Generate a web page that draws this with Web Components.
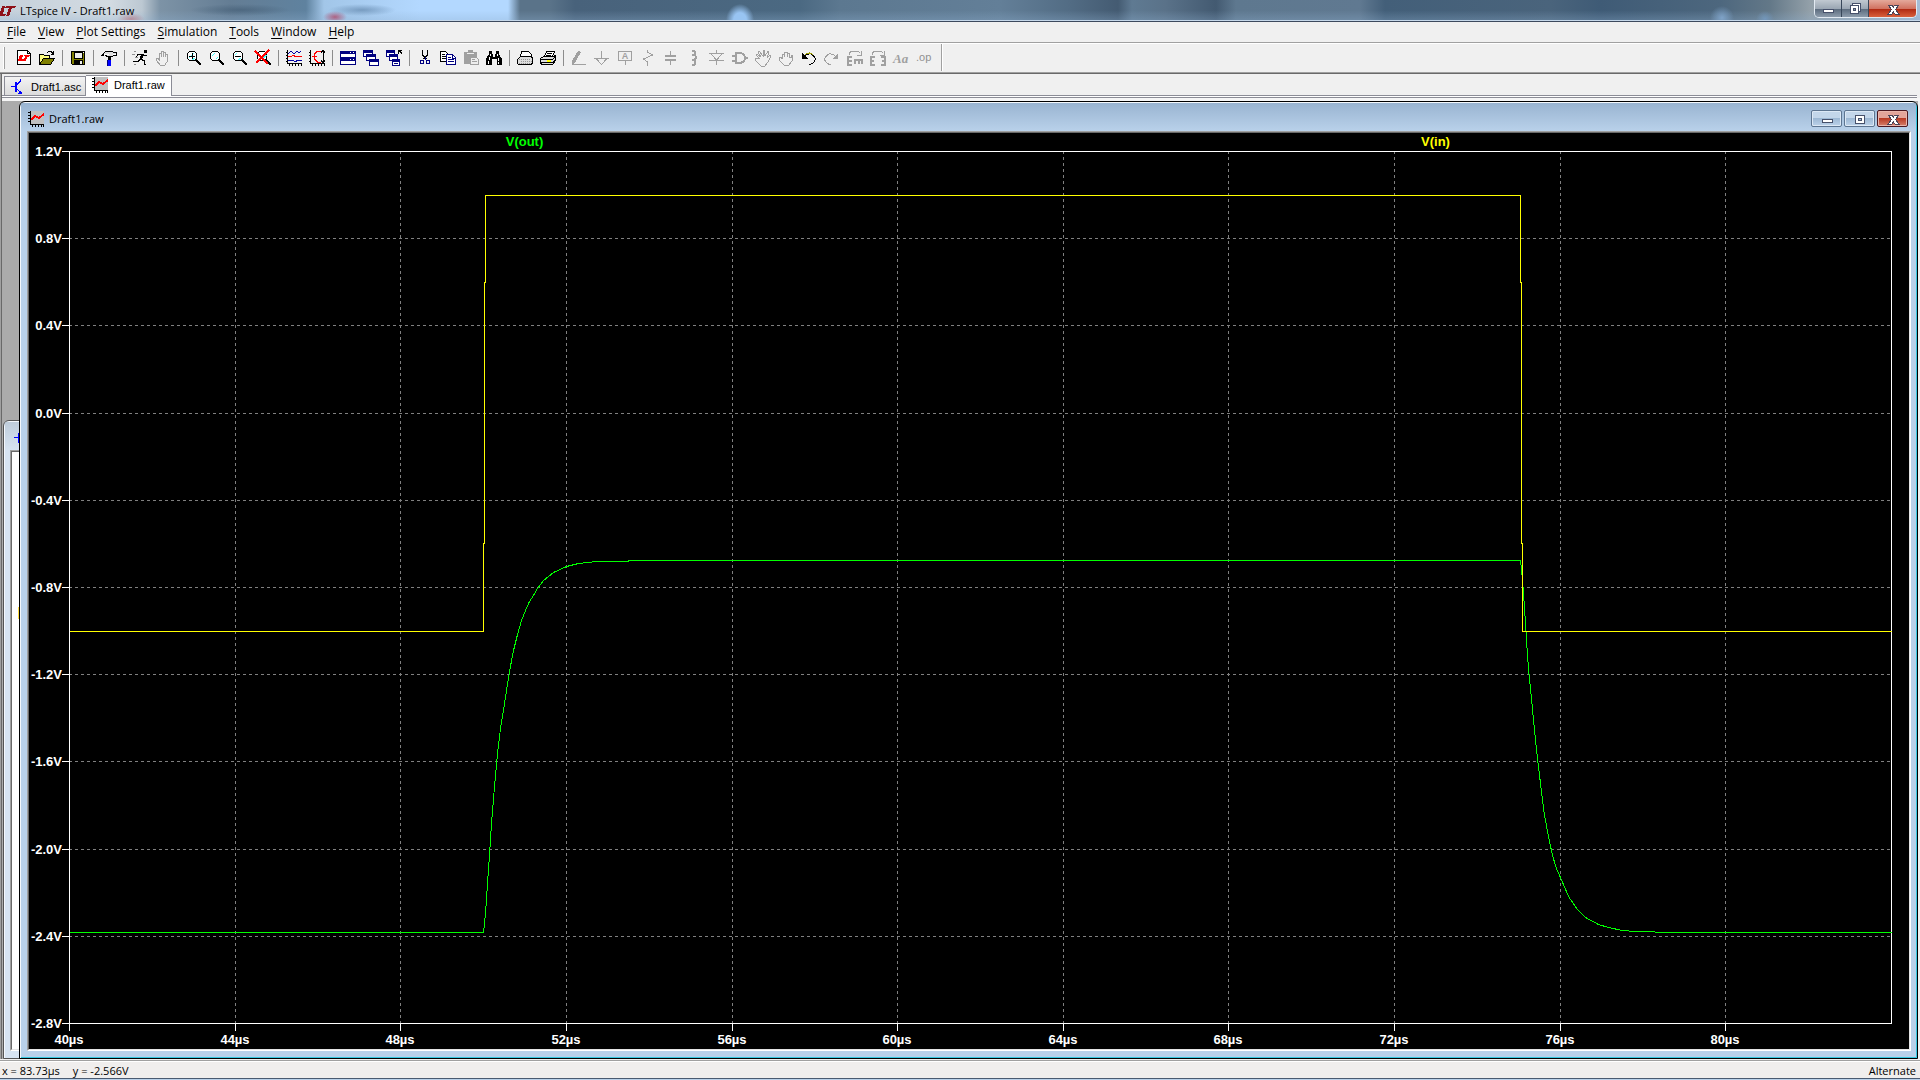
<!DOCTYPE html>
<html lang="en">
<head>
<meta charset="utf-8">
<title>LTspice IV - Draft1.raw</title>
<style>
html,body{margin:0;height:100%;overflow:hidden;background:#f0f0f0;font-family:"Open Sans","Noto Sans",sans-serif;font-size:11px;line-height:16px;color:#000}
</style>
</head>
<body>
<lt-app></lt-app>
<script>
const ICONS = {
  logo:'<path d="M2 3h3l-2 8h3l-1 2H-1zM6 3h10l-1 2h-3l-3 8H6l3-8H5z" fill="#8f1018"/>',
  bjt:'<path d="M0 7.500h4M9.500 0v2l-4 4M5 9l5 5" stroke="#00f" fill="none"/><path d="M4 3h2v10H4zM11 15H7l3-4z" fill="#00f"/>',
  wave:'<path d="M3 0h13v13H3z" fill="#c0c0c0"/><path d="M2 0h1v13h13v1H2zM0 1h2v1H0zM0 4h2v1H0zM0 7h2v1H0zM0 10h2v1H0zM4 14h1v2H4zM7 14h1v2H7zM10 14h1v2h-1zM13 14h1v2h-1zM15 14h1v2h-1z" fill="#000"/><path d="M3 8.500L7 5l4 2 5-4" stroke="#f00" stroke-width="2" fill="none"/>',
  new:'<path d="M1.500 .5h10l3 3v11h-13z" fill="#fff" stroke="#000"/><path d="M11.500 .5v3h3" fill="none" stroke="#000"/><path d="M4 5h3l-1 4h2l-1 2H2zM8 5h6l-1 2h-2l-1 4H7l2-4z" fill="#f00"/>',
  open:'<path d="M.5 14V4.500h4l1 1h5v4" fill="#ffff80" stroke="#000"/><path d="M.5 14.500l4-6h11l-4 6z" fill="#808000" stroke="#000"/><path d="M8 2.500l2-1h2l2 2M14.500 1v3h-3" fill="none" stroke="#000"/>',
  save:'<path d="M1.500 1.500h13v13h-12l-1-1z" fill="#808000" stroke="#000"/><path d="M4 2h8v6H4z" fill="#f0f0f0" stroke="#000"/><path d="M4 10h9v5H4z" fill="#000"/><path d="M10 11h2v3h-2z" fill="#f0f0f0"/><path d="M13 2h1v1h-1z" fill="#fff"/>',
  hammer:'<path d="M.5 5.500l4-4h7l1 1h3v3h-3l-1 1h-6l-1-2z" fill="#e0e0e0" stroke="#000"/><path d="M3 4h5M12 4h3" stroke="#fff"/><path d="M7 7h3v3H7z" fill="#000"/><path d="M7 10h3v6H7z" fill="#00f"/><path d="M6.500 10v6" stroke="#000080"/>',
  run:'<path d="M12 0h3v3h-3z" fill="#000"/><path d="M6 4.500h4l2 1h3M11 4L8 9M12 4.500L9 9.500l3 1v4M8 9.500l-2 2H1M6 4.500L4 7M12 14.500h2" fill="none" stroke="#000"/><path d="M9 5h3l-3 5H7z" fill="#000"/><path d="M2 1.500h2M0 4.500h3M3 7.500h3M2 14.500h2" stroke="#909090"/>',
  hand:'<path d="M4.500 9V3h2v4V1h2v6V2h2v5V4h2v7l-3 4.500h-4L1 10V8h2l2 3" fill="none" stroke="#a0a0a0"/>',
  zin:'<circle cx="6" cy="6" r="5" fill="#fff" stroke="#000"/><path d="M3 8l5-5M6 10l3-2" stroke="#60ffff"/><path d="M3 6.500h6M6.500 3v6" stroke="#000"/><path d="M9.500 9.500l5.500 5.500" stroke="#000" stroke-width="2"/>',
  zoom:'<circle cx="6" cy="6" r="5" fill="#fff" stroke="#000"/><path d="M3 6l3-3M7 9l2-2" stroke="#40ffff"/><path d="M9.500 9.500l5.500 5.500" stroke="#000" stroke-width="2"/>',
  zout:'<circle cx="6" cy="6" r="5" fill="#fff" stroke="#000"/><path d="M3 5l2-2M6 10l3-2" stroke="#60ffff"/><path d="M3 6.500h6" stroke="#000"/><path d="M9.500 9.500l5.500 5.500" stroke="#000" stroke-width="2"/>',
  zx:'<circle cx="7" cy="6" r="5" fill="#fff" stroke="#000"/><path d="M7 9l4-4" stroke="#40ffff" stroke-width="2"/><path d="M10.500 9.500l5.500 5.500" stroke="#000" stroke-width="2"/><path d="M0 1l13 13M14 0L1 13" stroke="#f00" stroke-width="2"/>',
  plots:'<path d="M1.500 0v13.500H16M0 2.500h2M0 5.500h2M0 8.500h2M0 11.500h2M3.500 14v2M6.500 14v2M9.500 14v2M12.500 14v2M15.500 14v2" stroke="#000" fill="none"/><path d="M2 4l3-3 3 3 3-3 2 2 2-2" stroke="#0000a0" fill="none"/><path d="M2 6.500h3l2-1 3 1h6" stroke="#f00" fill="none"/><path d="M2 10.500h5l2 1 3-1h4" stroke="#0000a0" fill="none"/>',
  fft:'<path d="M1.500 0v13.500H16M0 2.500h2M0 5.500h2M0 8.500h2M0 11.500h2M3.500 14v2M6.500 14v2M9.500 14v2M12.500 14v2M15.500 14v2M14.500 0v13M12 2.500l2-2 2 2M12 10.500l2 2 2-2" stroke="#000" fill="none"/><path d="M11.500 1h-3l-3 3v5l3 3h3M3 6.500h5" stroke="#f00" fill="none"/>',
  tile:'<path d="M0 1h16v14H0z" fill="#000080"/><path d="M1 4h14v3H1zM1 11h14v3H1z" fill="#fff"/><path d="M10 2h1v1h-1zM13 2h1v1h-1zM10 9h1v1h-1zM13 9h1v1h-1z" fill="#fff"/>',
  cascade:'<path d="M0 0h10v7H0zM3 4h10v7H3zM6 9h10v7H6z" fill="#000080"/><path d="M1 3h8v3H1zM4 7h8v3H4zM7 12h8v3H7z" fill="#fff"/><path d="M3 4h10v3H3zM6 9h10v3H6z" fill="#000080"/>',
  closeall:'<path d="M0 0h9v7H0zM3 4h9v7H3zM6 9h8v7H6z" fill="#000080"/><path d="M1 3h7v3H1zM4 7h7v3H4zM7 12h6v3H7z" fill="#fff"/><path d="M3 4h9v3H3zM6 9h8v3H6z" fill="#000080"/><path d="M8 13.500h4" stroke="#000080"/><path d="M12 0h4v1h-2l2 2v1h-1l-2-2v2h-1z" fill="#000"/>',
  cut:'<path d="M5.500 0v5l4 4M10.500 0v5l-4 4" stroke="#000" fill="none"/><circle cx="5" cy="12" r="2" fill="none" stroke="#000080"/><circle cx="11" cy="12" r="2" fill="none" stroke="#000080"/><path d="M8 7v3" stroke="#000080"/>',
  copy:'<path d="M.5 1.500h5l3 3v7h-8z" fill="#fff" stroke="#000"/><path d="M2 4.500h3M2 6.500h5M2 8.500h5" stroke="#000"/><path d="M6.500 4.500h6l3 3v7h-9z" fill="#fff" stroke="#000080"/><path d="M8 7.500h3M8 9.500h6M8 11.500h6M12.500 5v3h3" stroke="#000080" fill="none"/>',
  paste:'<path d="M1 2h4V0h5v2h4v12H1z" fill="#a0a0a0"/><path d="M4 3h7v1H4z" fill="#eee"/><path d="M7.500 7.500h6l2 2v5h-8z" fill="#eee" stroke="#a0a0a0"/><path d="M9 9.500h3M9 11.500h5" stroke="#a0a0a0"/>',
  find:'<path d="M3 1h3v3h1v3h2V4h1V1h3v3l3 5v6h-5V9H6v6H0V9l3-5z" fill="#000"/><path d="M4 4v2M3 7v3M2 11v3M11 4v2M12 8v3M12 12v2" stroke="#fff"/>',
  print:'<path d="M3.500 6.500l1-5h7l3 3v2" fill="#fff" stroke="#000"/><path d="M.5 9.500l3-3h11l1 2v5h-1v1h-13l-1-1z" fill="#ddd" stroke="#000"/><path d="M2 9h11M4 11h11M2 13h11" stroke="#999" stroke-dasharray="1 1"/>',
  setup:'<path d="M4.500 6.500l2-5h8l-2 5" fill="#fff" stroke="#000"/><path d="M7 3.500h5M6 5.500h5" stroke="#000"/><path d="M.5 8.500l3-2h10l2-1v5l-3 4h-11l-1-2z" fill="#ddd" stroke="#000"/><path d="M0 9.500h13M1 12.500h12M13 9l2-2M13 12l2-2" stroke="#000"/><path d="M7 10h4v2H7z" fill="#ff0"/>',
  pencil:'<path d="M1 15V11L7 1l3 1-5 9-3 4z" fill="#a0a0a0"/><path d="M2 14.500h13" stroke="#a0a0a0"/>',
  gnd:'<path d="M7.500 1v7M0 8.500h15M2.500 9l5 5.500 5-5.500" fill="none" stroke="#a0a0a0"/>',
  label:'<path d="M1.500 1.500h13v9h-13zM8 11v4" fill="none" stroke="#a0a0a0"/><text x="8" y="9" text-anchor="middle" font-family="Liberation Sans" font-weight="bold" font-size="9" fill="#a0a0a0">A</text>',
  res:'<path d="M7.500 0v2l5 3-9 4 4 3v4" fill="none" stroke="#a0a0a0"/>',
  cap:'<path d="M7.500 1v5M7.500 10v5" stroke="#a0a0a0"/><path d="M2 6h11M2 10h11" stroke="#a0a0a0" stroke-width="2"/>',
  ind:'<path d="M6 1h2q3 2 0 4h-2M8 5q4 2 0 5h-2M8 10q3 2 0 5h-2" fill="none" stroke="#a0a0a0" stroke-width="2"/>',
  diode:'<path d="M7.500 0v3M0 3.500h15M2 4l5.500 6L13 4M0 10.500h15M7.500 10v5" fill="none" stroke="#a0a0a0"/>',
  gate:'<path d="M4 3h4q5 1 5 5t-5 5H4zM0 5.500h4M0 10.500h4M13 8h3" fill="none" stroke="#a0a0a0" stroke-width="2"/>',
  move:'<path d="M4 8L1 5l1-1 4 3-3-5 1-1 4 5V0h1l1 6 3-5 1 1-2 6 3-3 1 1-3 6-3 4H6L0 10V8h2z" fill="none" stroke="#a0a0a0"/>',
  drag:'<path d="M4 9V4h2v3V2h3v5V3h2v4h2V5h1v6l-3 4H6L1 10V7h2z" fill="none" stroke="#a0a0a0"/>',
  undo:'<path d="M3 6.500q4-4 8-2 4 3 3 6-2 4-6 4" fill="none" stroke="#000"/><path d="M4 4.500q5-3 8 0" stroke="#a0a000" fill="none"/><path d="M1 3v6h6z" fill="#000"/>',
  redo:'<path d="M12 6.500q-4-4-8-2-4 3-3 6 2 4 6 4" fill="none" stroke="#a0a0a0"/><path d="M14 3v6H8z" fill="#a0a0a0"/>',
  rot:'<path d="M2 5q0-4 5-4 5 0 6 2M14 1v4h-4" fill="none" stroke="#a0a0a0"/><path d="M5 7H1v8h4M1 11h4M8 14v-4h7v4M12 10v4" fill="none" stroke="#a0a0a0" stroke-width="2"/>',
  mir:'<path d="M2 5q0-4 5-4 5 0 6 2M14 1v4h-4" fill="none" stroke="#a0a0a0"/><path d="M5 7H1v8h4M1 11h3M11 7h4v8h-4M15 11h-3" fill="none" stroke="#a0a0a0" stroke-width="2"/>',
  text:'<text x="0" y="13" font-family="Liberation Serif" font-style="italic" font-weight="bold" font-size="13" fill="#a0a0a0">Aa</text>',
  op:'<text x="0" y="11" font-family="Liberation Sans" font-size="11" fill="#909090">.op</text>',
  min:'<path d="M3.500 8.500h10v3h-10z" fill="#fff" stroke="#46506a"/>',
  restore:'<path d="M5.500 2.500h8v8h-8z" fill="#fff" stroke="#46506a"/><path d="M3.500 4.500h8v8h-8z" fill="#fff" stroke="#46506a"/><path d="M6.500 7.500h2v2h-2z" fill="#8a97aa" stroke="#46506a"/>',
  max:'<path d="M3.500 4.500h9v8h-9z" fill="#fff" stroke="#46506a"/><path d="M6.500 7.500h3v2h-3z" fill="#a9bcd4" stroke="#46506a"/>',
  x:'<path d="M3 4h4l1.500 2L10 4h4l-3.500 4.500L14 13h-4l-1.500-2L7 13H3l3.500-4.500z" fill="#fff" stroke="#4a4458"/>'
};

const define = (name, html, ready) => {
  const t = document.createElement('template');
  t.innerHTML = '<style>*{box-sizing:border-box}button{font:inherit;color:inherit;margin:0;padding:0;border:0;background:none}</style>' + html;
  customElements.define(name, class extends HTMLElement {
    constructor(){ super(); this.attachShadow({mode:'open'}).append(t.content.cloneNode(true)); }
    connectedCallback(){ if (ready) ready(this, this.shadowRoot); }
  });
};

define('px-icon', '<style>:host{display:block;width:16px;height:16px;flex:none}svg{display:block;overflow:visible}</style><svg width="16" height="16" shape-rendering="crispEdges" aria-hidden="true"></svg>',
  (el, r) => { r.querySelector('svg').innerHTML = ICONS[el.getAttribute('name')] || ''; });

define('caption-button', `<style>
:host{display:block}
button{display:flex;align-items:center;justify-content:center;width:100%;height:100%;border:1px solid #5d7591;border-radius:2px;box-shadow:inset 0 0 0 1px #dce8f5;background:linear-gradient(#c3d6ea 0 48%,#9db8d4 50%,#bcd2e9)}
:host([kind=x]) button{border-color:#4c1720;box-shadow:inset 0 0 0 1px #e9b5ac;background:linear-gradient(#e3a49a 0 48%,#b93a24 50%,#d5806c)}
:host([glass]) button{border:0;border-right:1px solid #38475a;border-radius:0;box-shadow:none;background:linear-gradient(#c1c9d1,#9ba7b4 50%,#5c6c7e 54%,#8d9cac)}
:host([glass][kind=x]) button{border:0;background:linear-gradient(#e4a99b,#d17361 50%,#b02a12 54%,#d9603c)}
</style><button type="button"><px-icon></px-icon></button>`,
  (el, r) => {
    const k = el.getAttribute('kind');
    r.querySelector('button').setAttribute('aria-label', k === 'x' ? 'Close' : k);
    const i = document.createElement('px-icon'); i.setAttribute('name', k);
    r.querySelector('px-icon').replaceWith(i);
  });

define('title-bar', `<style>
:host{display:flex;height:22px;align-items:flex-start;overflow:hidden;border-bottom:1px solid #3d4a5e;box-shadow:inset 0 -1px #c6d8ea;
background:
radial-gradient(14px 6px at 131px 19px,#b5606c88,transparent),
radial-gradient(12px 6px at 335px 17px,#b04a6acc,transparent),
radial-gradient(34px 6px at 362px 10px,#5f83a8aa,transparent),
radial-gradient(50px 6px at 240px 10px,#3c566e88,transparent),
radial-gradient(14px 16px at 740px 20px,#98c4f2 45%,transparent),
radial-gradient(12px 12px at 1722px 18px,#7fa3c8,transparent),
radial-gradient(9px 8px at 1765px 19px,#7397bb,transparent),
linear-gradient(transparent 50%,#8fb0d055),
linear-gradient(90deg,#c5d0da 0,#d3dbe2 110px,#bcc8d2 142px,#7d93a6 160px,#647d94 230px,#5f829f 306px,#a2c6e8 324px,#b3d8ff 420px,#b3d8ff 508px,#5a7389 520px,#5a7389 550px,#48627b 575px,#4b6982 800px,#5c7890 840px,#637f98 1000px,#526c84 1070px,#445b72 1118px,#5f7a92 1132px,#5a7289 1165px,#435a71 1216px,#5e788f 1236px,#607991 1360px,#435f79 1385px,#4a647c 1550px,#3f5b76 1600px,#4d677e 1720px,#637888 1770px,#93a0a9 1810px,#a5bdd6)}
.l{flex:1;display:flex;gap:4px;align-items:center;height:22px}
.caps{display:flex;width:103px;height:18px;margin-right:3px;border:1px solid #e2eaf2;border-top:0;border-radius:0 0 5px 5px;overflow:hidden}
caption-button{flex:27 1 0}caption-button[kind=x]{flex:47 1 0}
</style><span class="l"><px-icon name="logo"></px-icon><span><slot></slot></span></span>
<div class="caps"><caption-button glass kind="min"></caption-button><caption-button glass kind="restore"></caption-button><caption-button glass kind="x"></caption-button></div>`);

define('menu-bar', `<style>
:host{display:block;height:22px;border-bottom:1px solid #fff;background:#f0f0f0}
nav{display:flex;height:21px;align-items:center;border-bottom:1px solid #a0a0a0;padding-left:1px;font-size:12px}
button{padding:0 6px;height:19px}
u{text-underline-offset:2px}
</style><nav aria-label="Main menu"><button><u>F</u>ile</button><button><u>V</u>iew</button><button><u>P</u>lot Settings</button><button><u>S</u>imulation</button><button><u>T</u>ools</button><button><u>W</u>indow</button><button><u>H</u>elp</button></nav>`);

define('tool-bar', `<style>
:host{display:block;height:30px;background:#f0f0f0;border-bottom:1px solid #696969}
.row{display:flex;height:29px;border-bottom:1px solid #a0a0a0;align-items:center;padding:0 0 1px 3px}
.grip{width:2px;height:22px;background:linear-gradient(90deg,#fff 50%,#a0a0a0 50%);margin-right:7px}
button{width:23px;height:24px;display:flex;align-items:center;justify-content:center}
i{width:8px;height:16px;display:flex;justify-content:center}
i::before{content:"";width:1px;background:#8c8c8c}
.end{width:2px;height:27px;margin-left:6px;background:linear-gradient(90deg,#a0a0a0 50%,#fff 50%)}
</style><div class="row" role="toolbar"></div>`,
  (el, r) => {
    const dim = 'hand paste pencil gnd label res cap ind diode gate move drag redo rot mir text op'.split(' ');
    const set = 'new open | save | hammer | run hand | zin zoom zout zx | plots fft | tile cascade closeall | cut copy paste find | print setup | pencil gnd label res cap ind diode gate move drag undo redo rot mir text op';
    r.querySelector('.row').innerHTML = '<span class="grip"></span>' + set.split(' ').map(n => n === '|' ? '<i></i>'
      : `<button type="button" aria-label="${n}"${dim.includes(n) ? ' disabled' : ''}><px-icon name="${n}"></px-icon></button>`).join('') + '<span class="end"></span>';
  });

define('doc-tabs', `<style>
:host{display:block;height:27px;background:#f0f0f0;border-left:1px solid #a0a0a0;box-shadow:inset 1px 0 #696969;font-family:"Liberation Sans",Arial,sans-serif}
.strip{display:flex;align-items:flex-end;height:22px;border-bottom:1px solid #8b8c96;margin:0 3px 0 1px;padding-left:2px}
.rule{height:2px;margin:0 3px 0 1px;background:#fff;border-bottom:1px solid #8b8c96}
.low{height:3px;margin-left:1px;background:#f6f6f6}
button{display:flex;align-items:center;height:19px;border:1px solid #8b8c96;border-bottom:0;background:linear-gradient(#f3f3f3,#dcdcdc);padding:2px 4px 0 6px;gap:4px;width:82px;white-space:nowrap}
button[aria-selected=true]{height:21px;background:#fff;margin-bottom:-1px;padding:0 8px 2px 6px;gap:6px;width:86px;border-left:0}
</style><div class="strip" role="tablist"><button role="tab" aria-selected="false"><px-icon name="bjt"></px-icon>Draft1.asc</button><button role="tab" aria-selected="true"><px-icon name="wave"></px-icon>Draft1.raw</button></div><div class="rule"></div><div class="low"></div>`);

define('wave-plot', `<style>
:host{display:block;min-width:0;min-height:0;overflow:hidden;background:#000;font:bold 13px/16px "Liberation Sans",Arial,sans-serif}
svg{display:block}
</style><svg role="img" aria-label="Waveforms"></svg>`,
  (el, r) => {
    const svg = r.querySelector('svg');
    // Traces as [time in microseconds, volts].
    const vin = [[40,-1],[50,-1],[50,-.6],[50.025,-.6],[50.025,.6],[50.05,.6],[50.05,1],[75.04,1],[75.04,.6],[75.065,.6],[75.065,-.6],[75.09,-.6],[75.09,-1],[84,-1]];
    const up = [[41,1177],[46,1120],[52,1030],[58,945],[64,850],[70,775],[76,705],[82,640],[91,565],[100,510],[109,450],[118,395],[130,330],[142,283],[154,240],[166,210],[178,185],[190,166],[202,146],[220,120],[252,96],[289,80],[327,71],[355,68],[378,65],[476,64],[477,61]];
    const down = [[91,61],[94,85],[100,160],[106,250],[109,300],[115,388],[124,475],[133,570],[142,655],[151,730],[163,825],[175,890],[187,945],[199,985],[211,1013],[235,1068],[262,1107],[286,1132],[325,1153],[355,1161],[396,1171],[432,1174],[494,1174],[495,1177]];
    const volts = s => -.6768 - (s - 61) / 1116 * 1.7064;
    const vout = [[40,-2.3832], ...up.map(([a,b]) => [50 + (a - 41) / 124.2, volts(b)]), ...down.map(([a,b]) => [75.04 + (a - 91) / 124.2, volts(b)]), [84,-2.3832]];
    const draw = () => {
      const w = el.clientWidth, h = el.clientHeight;
      if (!w || !h) return;
      svg.setAttribute('width', w); svg.setAttribute('height', h);
      const L = 40, T = 18, R = w - 18, B = h - 26;
      const X = t => Math.round(L + (t - 40) * (R - L) / 44) , Y = v => Math.round(T + (1.2 - v) * (B - T) / 4);
      let g = '', a = '', s = '';
      for (let i = 0; i <= 10; i++) {
        const v = 1.2 - i * .4, y = Y(v), x = X(40 + i * 4);
        if (i && i < 10) g += `M${L} ${y + .5}H${R}`;
        if (i) g += `M${x + .5} ${T}V${B}`;
        a += `M${L - 7} ${y + .5}h7M${x + .5} ${B}v8`;
        s += `<text x="${L - 7}" y="${y + 5}" text-anchor="end">${v.toFixed(1).replace('-0.0','0.0')}V</text><text x="${x}" y="${B + 21}" text-anchor="middle">${40 + i * 4}µs</text>`;
      }
      const line = p => p.map(([t,v]) => `${X(t) + .5},${Y(v) + .5}`).join(' ');
      const q = (R - L) / 4;
      svg.innerHTML = `<g fill="none" shape-rendering="crispEdges"><path d="${g}" stroke="#808080" stroke-dasharray="3 3"/><path d="${a}M${L + .5} ${T + .5}H${R + .5}V${B + .5}H${L + .5}z" stroke="#fff"/><polyline points="${line(vout)}" stroke="#0f0"/><polyline points="${line(vin)}" stroke="#ff0"/></g><g fill="#fff">${s}</g><text x="${L + q}" y="13" text-anchor="middle" fill="#0f0">V(out)</text><text x="${L + 3 * q}" y="13" text-anchor="middle" fill="#ff0">V(in)</text>`;
    };
    draw();
    new ResizeObserver(draw).observe(el);
  });

define('child-window', `<style>
:host{display:flex;flex-direction:column;border:1px solid #000;border-radius:6px 6px 0 0;background:#b9d1ea;box-shadow:inset 1px 1px #f4f8fc,inset -1px -1px #35c8e0;overflow:hidden}
header{display:flex;align-items:center;height:28px;flex:none;margin:1px 1px 0;padding:3px 8px 0 7px;background:linear-gradient(#99b4d1,#b9d1ea);gap:5px}
span{flex:1}
.caps{display:flex;gap:2px}
caption-button{width:31px;height:17px}
.client{flex:1;display:grid;min-height:0;margin:0 6px 7px 7px;border:1px solid;border-color:#a0a0a0 #fff #fff #a0a0a0}
.client>div{display:grid;min-height:0;min-width:0;border:1px solid;border-color:#696969 #e3e3e3 #e3e3e3 #696969}
:host([inactive]){background:#d7e4f2;border-color:#555;box-shadow:inset 1px 1px #f4f8fc}
:host([inactive]) header{background:linear-gradient(#bfcddb,#d7e4f2);padding-left:9px}
:host([inactive]) .caps{display:none}
:host([inactive]) .client{margin:0 6px 7px 6px}
:host([inactive]) .client>div{background:#fff}
</style><header><slot name="icon"></slot><span><slot name="title"></slot></span><div class="caps"><caption-button kind="min"></caption-button><caption-button kind="max"></caption-button><caption-button kind="x"></caption-button></div></header><div class="client"><div><slot></slot></div></div>`);

define('status-bar', `<style>
:host{display:flex;justify-content:space-between;align-items:center;height:19px;flex:none;border-top:1px solid #a0a0a0;border-bottom:1px solid #4a5a70;box-shadow:0 1px #b9d1ea,inset 0 1px #fff;background:#f0eeed;padding:3px 4px 0 2px;margin:1px 0 1px}
div{display:flex;gap:13px}
</style><div><slot></slot></div><slot name="right"></slot>`);

define('lt-app', `<style>
:host{display:flex;flex-direction:column;height:100vh}
.desk{flex:1;position:relative;background:#ababab;border-left:1px solid #a0a0a0;box-shadow:inset 1px 0 #696969;border-right:2px solid #f0f0f0;overflow:hidden}
child-window{position:absolute}
.back{left:2px;top:319px;width:400px;bottom:0}
.front{left:18px;top:0;right:0;bottom:0}
.pin{width:2px;height:12px;margin:155px 0 0 6px;background:#400;border-left:1px solid #fd4}
</style>
<title-bar>LTspice IV - Draft1.raw</title-bar><menu-bar></menu-bar><tool-bar></tool-bar><doc-tabs></doc-tabs>
<div class="desk">
<child-window class="back" inactive><px-icon slot="icon" name="bjt"></px-icon><div class="pin"></div></child-window>
<child-window class="front"><px-icon slot="icon" name="wave"></px-icon><span slot="title">Draft1.raw</span><wave-plot></wave-plot></child-window>
</div>
<status-bar><span>x = 83.73µs</span><span>y = -2.566V</span><span slot="right">Alternate</span></status-bar>`);
</script>
</body>
</html>
